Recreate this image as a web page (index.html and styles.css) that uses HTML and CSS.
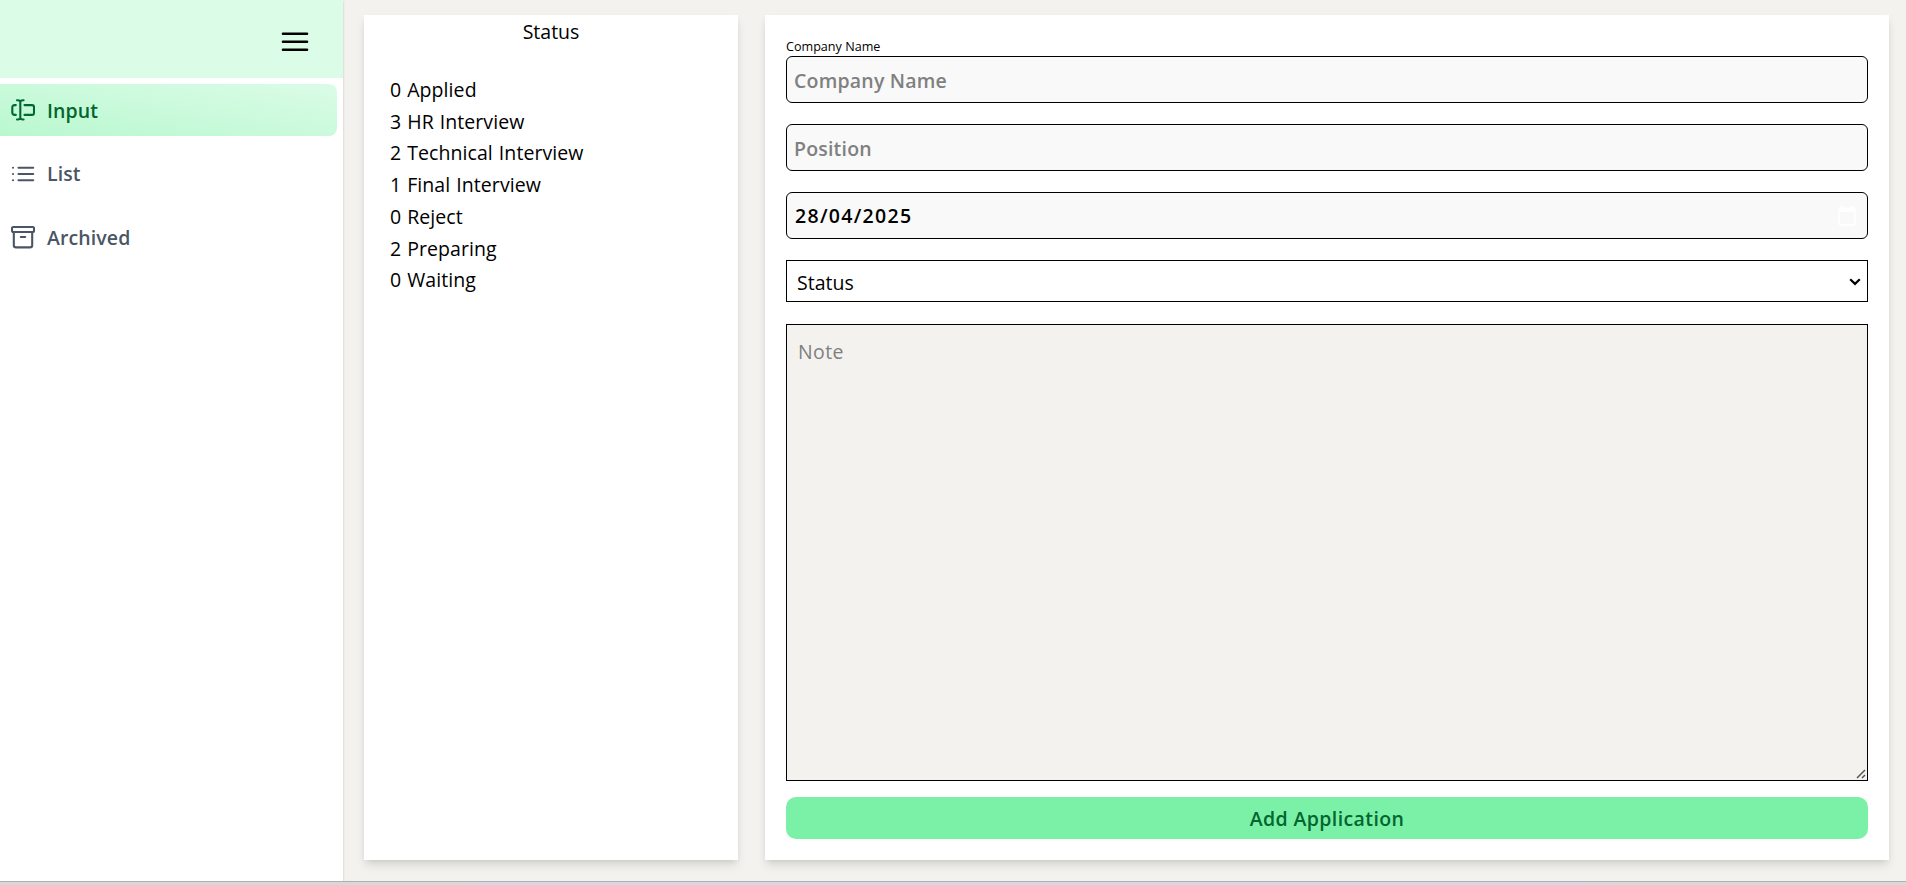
FILE: index.html
```html
<!DOCTYPE html>
<html lang="en">
<head>
<meta charset="utf-8">
<title>Applications</title>
<link rel="stylesheet" href="styles.css">
</head>
<body>
<div class="app">
  <aside class="sidebar">
    <div class="sidebar-head">
      <svg class="menu" width="28" height="22" viewBox="0 0 28 22"><path d="M2 2.800h24M2 10.800h24M2 18.800h24" fill="none" stroke="#000" stroke-width="2.600" stroke-linecap="round"/></svg>
    </div>
    <nav class="nav">
      <a class="item active">
        <svg class="icon" viewBox="0 0 24 24"><path d="M6 2.300h.6c1.600 0 2.700.5 2.700 1.700 0-1.200 1.100-1.700 2.700-1.700h.6M9.300 4v16M6 21.500h.6c1.600 0 2.700-.5 2.700-1.700 0 1.200 1.100 1.700 2.700 1.700h.6M4.800 7.100H3.500a2.200 2.200 0 0 0-2.200 2.200v5.400a2.200 2.200 0 0 0 2.200 2.200h1.300M13.500 7.100h7.500a2 2 0 0 1 2 2v5.800a2 2 0 0 1-2 2h-7.500"/></svg>
        <span>Input</span>
      </a>
      <a class="item">
        <svg class="icon" viewBox="0 0 24 24"><path d="M7.500 5.700h14.700M7.500 12h14.700M7.500 18.300h14.700M2 5.700h.01M2 12h.01M2 18.300h.01"/></svg>
        <span>List</span>
      </a>
      <a class="item">
        <svg class="icon" viewBox="0 0 24 24"><rect x="1" y="2" width="22" height="5" rx="1.200"/><path d="M2.800 7v13.200a2.200 2.200 0 0 0 2.200 2.200h14a2.200 2.200 0 0 0 2.200-2.200V7M9.800 12h4.400"/></svg>
        <span>Archived</span>
      </a>
    </nav>
  </aside>
  <main class="main">
    <section class="panel status">
      <h2 class="title">Status</h2>
      <ul class="counts">
        <li>0 Applied</li>
        <li>3 HR Interview</li>
        <li>2 Technical Interview</li>
        <li>1 Final Interview</li>
        <li>0 Reject</li>
        <li>2 Preparing</li>
        <li>0 Waiting</li>
      </ul>
    </section>
    <form class="panel form">
      <label class="label" for="company">Company Name</label>
      <input class="field" id="company" type="text" placeholder="Company Name">
      <input class="field" type="text" placeholder="Position">
      <div class="field date">
        <span>28/04/2025</span>
        <svg width="18" height="20" viewBox="0 0 18 20"><path d="M2.500 2.500h13a1.200 1.200 0 0 1 1.200 1.200v14a1 1 0 0 1-1 1H2.300a1 1 0 0 1-1-1v-14a1.200 1.200 0 0 1 1.200-1.200z" fill="none" stroke="#fff" stroke-width="1.900"/><path d="M1 2h16v4H1zM3 0h2v2H3zM13 0h2v2h-2z" fill="#fff"/></svg>
      </div>
      <div class="select-wrap">
        <select class="select"><option>Status</option></select>
        <svg class="arrow" width="12" height="8" viewBox="0 0 12 8"><path d="M1.200 1.300L6 5.900l4.800-4.600" fill="none" stroke="#000" stroke-width="2.200"/></svg>
      </div>
      <div class="note-wrap">
        <textarea class="note" placeholder="Note"></textarea>
        <svg class="grip" width="10" height="10" viewBox="0 0 10 10"><path d="M1 9l8-8M6 9l3-3" fill="none" stroke="#555" stroke-width="1.500"/></svg>
      </div>
      <button class="submit" type="button">Add Application</button>
    </form>
  </main>
</div>
<div class="edge"></div>
</body>
</html>
```
FILE: styles.css
```css
* { box-sizing: border-box; }
body {
  margin: 0;
  height: 885px;
  overflow: hidden;
  display: flex;
  flex-direction: column;
  background: #f3f2ee;
  color: #000;
  font-family: "Open Sans", "Noto Sans", sans-serif;
  font-size: 19.500px;
}
.app { display: flex; height: 881px; }
.sidebar {
  width: 343px;
  background: #fff;
  box-shadow: 0 1px 3px rgba(0, 0, 0, .1), 0 1px 2px rgba(0, 0, 0, .1);
}
.sidebar-head {
  display: flex;
  justify-content: flex-end;
  align-items: flex-start;
  height: 78px;
  padding: 31px 34px 0 0;
  background: #dbfce7;
}
.nav { display: flex; flex-direction: column; gap: 11.500px; padding: 6px 6px 0 0; }
.item {
  display: flex;
  align-items: center;
  gap: 12px;
  height: 52px;
  padding-left: 11px;
  border-radius: 0 8px 8px 0;
  color: #4a5565;
  font-weight: 600;
  letter-spacing: .1px;
}
.active { background: linear-gradient(to top right, #b9f8cf, #dbfce7); color: #016630; }
.icon {
  width: 24px;
  height: 24px;
  fill: none;
  stroke: currentColor;
  stroke-width: 2.100;
  stroke-linecap: round;
  stroke-linejoin: round;
}
.main {
  flex: 1;
  display: grid;
  grid-template-columns: 374px 1124px;
  column-gap: 27px;
  padding: 15px 17px 21px 21px;
}
.panel {
  background: #fff;
  box-shadow: 0 6px 10px -1px rgba(0, 0, 0, .1), 0 3px 6px -2px rgba(0, 0, 0, .1);
}
.title { margin: 0; text-align: center; font-size: inherit; font-weight: 400; line-height: 34px; }
.counts {
  list-style: none;
  margin: 0;
  padding: 25px 26px;
  line-height: 31.700px;
  letter-spacing: .08px;
  word-spacing: .8px;
}
.form { display: flex; flex-direction: column; padding: 21px; }
.label { height: 20px; padding-top: 1px; line-height: 20px; font-size: 12.600px; }
.field {
  width: 100%;
  height: 47px;
  margin: 0 0 21px;
  padding: 2px 7px 0;
  border: 1px solid #000;
  border-radius: 6px;
  background: #f9f9f9;
  font: inherit;
  font-weight: 600;
}
.field::placeholder { color: #808080; opacity: 1; letter-spacing: .2px; }
.note::placeholder { color: #808080; opacity: 1; }
.date {
  display: flex;
  align-items: center;
  justify-content: space-between;
  padding: 0 11px 0 8px;
  letter-spacing: 1.300px;
}
.select-wrap { position: relative; height: 42px; margin: 0 0 22px; }
.select {
  appearance: none;
  width: 100%;
  height: 42px;
  padding: 2px 10px 0;
  border: 1px solid #000;
  border-radius: 0;
  background: #fff;
  color: #000;
  font: inherit;
}
.arrow { position: absolute; right: 7px; top: 18px; pointer-events: none; }
.note-wrap { position: relative; height: 457px; margin: 0 0 16px; }
.note {
  display: block;
  width: 100%;
  height: 457px;
  padding: 13px 11px;
  border: 1px solid #000;
  background: #f3f2ee;
  font: inherit;
  letter-spacing: .4px;
  resize: none;
}
.grip { position: absolute; right: 2px; bottom: 2px; pointer-events: none; }
.submit {
  height: 42px;
  padding: 0;
  border: 0;
  border-radius: 10px;
  background: #7bf1a8;
  color: #016630;
  font: inherit;
  font-weight: 600;
  letter-spacing: .4px;
}
.edge {
  height: 4px;
  border-top: 1px solid #b0b0b3;
  background: linear-gradient(to right, #d8d8d8 0, #d8d8d9 460px, #dad7e5 500px, #dad7e5 1560px, #d8d8d8 1620px);
}
```
